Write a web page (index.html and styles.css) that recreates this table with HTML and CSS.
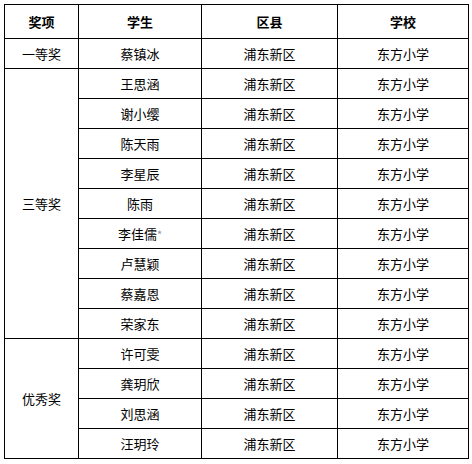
FILE: index.html
```html
<!DOCTYPE html>
<html lang="zh">
<head>
<meta charset="utf-8">
<link rel="stylesheet" href="styles.css">
</head>
<body>
<div class="page">
<table class="awards">
  <colgroup>
    <col class="c1"><col class="c2"><col class="c3"><col class="c4">
  </colgroup>
  <thead>
    <tr class="head"><th>奖项</th><th>学生</th><th>区县</th><th>学校</th></tr>
  </thead>
  <tbody>
    <tr><td>一等奖</td><td>蔡镇冰</td><td>浦东新区</td><td>东方小学</td></tr>
    <tr><td rowspan="9">三等奖</td><td>王思涵</td><td>浦东新区</td><td>东方小学</td></tr>
    <tr><td>谢小缨</td><td>浦东新区</td><td>东方小学</td></tr>
    <tr><td>陈天雨</td><td>浦东新区</td><td>东方小学</td></tr>
    <tr><td>李星辰</td><td>浦东新区</td><td>东方小学</td></tr>
    <tr><td>陈雨</td><td>浦东新区</td><td>东方小学</td></tr>
    <tr><td>李佳儒<span class="star">*</span></td><td>浦东新区</td><td>东方小学</td></tr>
    <tr><td>卢慧颖</td><td>浦东新区</td><td>东方小学</td></tr>
    <tr><td>蔡嘉恩</td><td>浦东新区</td><td>东方小学</td></tr>
    <tr><td>荣家东</td><td>浦东新区</td><td>东方小学</td></tr>
    <tr><td rowspan="4">优秀奖</td><td>许可雯</td><td>浦东新区</td><td>东方小学</td></tr>
    <tr><td>龚玥欣</td><td>浦东新区</td><td>东方小学</td></tr>
    <tr><td>刘思涵</td><td>浦东新区</td><td>东方小学</td></tr>
    <tr><td>汪玥玲</td><td>浦东新区</td><td>东方小学</td></tr>
  </tbody>
</table>
</div>
</body>
</html>
```

FILE: styles.css
```css
html, body {
  margin: 0;
  padding: 0;
  background: #ffffff;
}
.page {
  padding: 4px 0 0 4px;
}
.awards {
  border-collapse: collapse;
  table-layout: fixed;
  width: 464px;
  font-family: "Noto Sans CJK SC", "Noto Sans", sans-serif;
  font-size: 13px;
  color: #000;
}
.c1 { width: 74px; }
.c2 { width: 123px; }
.c3 { width: 136px; }
.c4 { width: 131px; }
.awards th,
.awards td {
  border: 1px solid #000;
  padding: 0;
  text-align: center;
  vertical-align: middle;
  line-height: 16px;
}
.awards th {
  font-weight: bold;
}
.awards tr.head {
  height: 34px;
}
.awards tbody tr {
  height: 30px;
}
.star {
  color: #8a8f99;
  font-size: 11px;
}
```
